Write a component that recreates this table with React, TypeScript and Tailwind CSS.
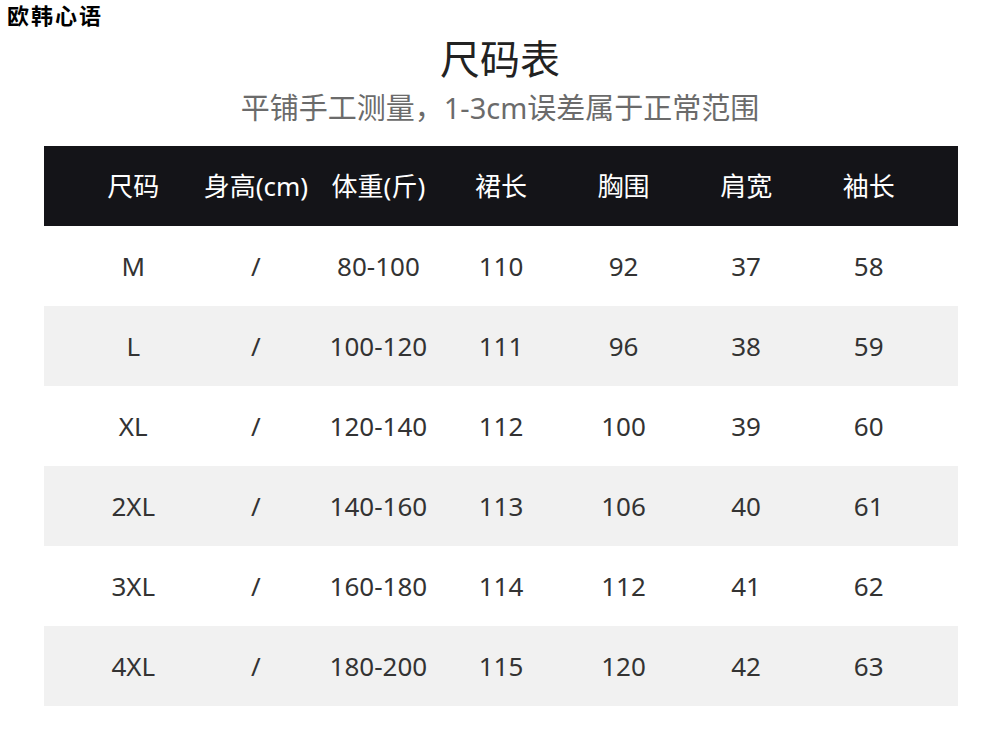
import React from "react";

const headers = ["尺码", "身高(cm)", "体重(斤)", "裙长", "胸围", "肩宽", "袖长"];

const rows = [
  ["M", "/", "80-100", "110", "92", "37", "58"],
  ["L", "/", "100-120", "111", "96", "38", "59"],
  ["XL", "/", "120-140", "112", "100", "39", "60"],
  ["2XL", "/", "140-160", "113", "106", "40", "61"],
  ["3XL", "/", "160-180", "114", "112", "41", "62"],
  ["4XL", "/", "180-200", "115", "120", "42", "63"],
];

const sans = { fontFamily: '"Noto Sans", "Noto Sans CJK SC", sans-serif' };

export default function App() {
  return (
    <div className="w-[1000px] h-[744px] bg-white overflow-hidden relative" style={sans}>
      <div
        className="absolute left-[7px] top-0 pt-[1px] text-[22px] leading-[26px] font-bold text-black tracking-[2px] whitespace-nowrap"
        style={{ fontFamily: '"Noto Sans CJK SC", serif' }}
      >
        欧韩心语
      </div>

      <div className="flex flex-col items-center pt-[33px]">
        <div className="text-[40px] leading-[52px] text-[#222]">尺码表</div>
        <div className="text-[29px] leading-[40px] text-[#6b6b6b] mt-[3px]">
          平铺手工测量，1-3cm误差属于正常范围
        </div>
      </div>

      <div className="mx-[44px] mt-[18px] w-[914px]">
        <div className="bg-[#141418] h-[80px] px-[28px] grid grid-cols-7 items-center text-white text-[26px]">
          {headers.map((h) => (
            <div key={h} className="text-center">
              {h}
            </div>
          ))}
        </div>
        {rows.map((r, i) => (
          <div
            key={r[0]}
            className={`h-[80px] px-[28px] grid grid-cols-7 items-center text-[#333] text-[26px] ${
              i % 2 === 1 ? "bg-[#f1f1f1]" : "bg-white"
            }`}
          >
            {r.map((c, j) => (
              <div key={j} className="text-center">
                {c}
              </div>
            ))}
          </div>
        ))}
      </div>
    </div>
  );
}
